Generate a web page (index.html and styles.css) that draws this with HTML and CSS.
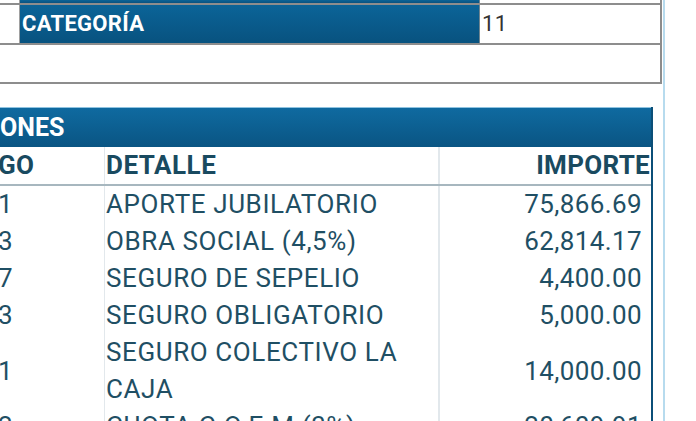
FILE: index.html
```html
<!DOCTYPE html>
<html lang="es">
<head>
<meta charset="utf-8">
<link rel="stylesheet" href="styles.css">
</head>
<body>
<div class="sheet">
  <div class="info">
    <div class="info-row prev">
      <div class="cell side"></div>
      <div class="cell label"></div>
      <div class="cell value"></div>
    </div>
    <div class="info-row">
      <div class="cell side"></div>
      <div class="cell label">CATEGORÍA</div>
      <div class="cell value">11</div>
    </div>
    <div class="info-row blank"></div>
  </div>

  <div class="deductions">
    <div class="title">ONES</div>
    <div class="row head">
      <div class="c code">GO</div>
      <div class="c detail">DETALLE</div>
      <div class="c amount">IMPORTE</div>
    </div>
    <div class="row">
      <div class="c code">1</div>
      <div class="c detail">APORTE JUBILATORIO</div>
      <div class="c amount">75,866.69</div>
    </div>
    <div class="row">
      <div class="c code">3</div>
      <div class="c detail">OBRA SOCIAL (4,5%)</div>
      <div class="c amount">62,814.17</div>
    </div>
    <div class="row">
      <div class="c code">7</div>
      <div class="c detail">SEGURO DE SEPELIO</div>
      <div class="c amount">4,400.00</div>
    </div>
    <div class="row">
      <div class="c code">3</div>
      <div class="c detail">SEGURO OBLIGATORIO</div>
      <div class="c amount">5,000.00</div>
    </div>
    <div class="row">
      <div class="c code">1</div>
      <div class="c detail">SEGURO COLECTIVO LA<br>CAJA</div>
      <div class="c amount">14,000.00</div>
    </div>
    <div class="row">
      <div class="c code">2</div>
      <div class="c detail">CUOTA C.O.E.M (3%)</div>
      <div class="c amount">20,609.91</div>
    </div>
  </div>
</div>
</body>
</html>
```

FILE: styles.css
```css
html, body {
  margin: 0;
  padding: 0;
  background: #ffffff;
  overflow: hidden;
}
body {
  font-family: Roboto, "Liberation Sans", sans-serif;
  width: 696px;
  height: 421px;
}
.sheet {
  width: 663px;
  height: 421px;
  border-right: 2px solid #b7dbee;
  box-sizing: content-box;
}
.info {
  width: 660px;
  border-right: 2px solid #8d8d8d;
}
.info-row {
  display: grid;
  grid-template-columns: 20px 460px 1fr;
  height: 38px;
  border-bottom: 2px solid #8d8d8d;
}
.info-row.prev {
  height: 3px;
}
.info-row.blank {
  display: block;
  height: 37px;
}
.cell {
  display: flex;
  align-items: center;
  font-size: 22px;
  letter-spacing: 0.3px;
  line-height: 1;
}
.side {
  border-right: 1px solid #a0a0a0;
}
.label {
  background: linear-gradient(#0b6498, #08527f);
  color: #ffffff;
  font-weight: 700;
  padding-left: 2px;
  border-right: 1px solid #6f8590;
}
.value {
  color: #333333;
  padding-left: 2px;
}
.deductions {
  margin-top: 23px;
  width: 651px;
  border-right: 2px solid #0b4f78;
}
.title {
  height: 40px;
  box-sizing: border-box;
  border-top: 1px solid #8fc3e0;
  background: linear-gradient(#0f6aa0, #0a5583);
  color: #ffffff;
  font-weight: 700;
  font-size: 25px;
  display: flex;
  align-items: center;
}
.row {
  display: grid;
  grid-template-columns: 105px 335px 1fr;
  color: #1f4f64;
  font-size: 26px;
  letter-spacing: 0.4px;
  line-height: 37px;
}
.row .detail {
  letter-spacing: 0.6px;
}
.row.head {
  font-weight: 700;
  color: #194a60;
  letter-spacing: 0.3px;
  border-bottom: 2px solid #a7b7bf;
}
.row.head .detail {
  letter-spacing: 0.5px;
}
.c {
  display: flex;
  align-items: center;
}
.code {
  border-right: 1px solid #e2e8ec;
  margin-left: -2px;
}
.detail {
  padding-left: 1px;
  border-right: 2px solid #e2e8ec;
}
.amount {
  justify-content: flex-end;
  padding-right: 9px;
}
.head .amount {
  padding-right: 1px;
}
```
